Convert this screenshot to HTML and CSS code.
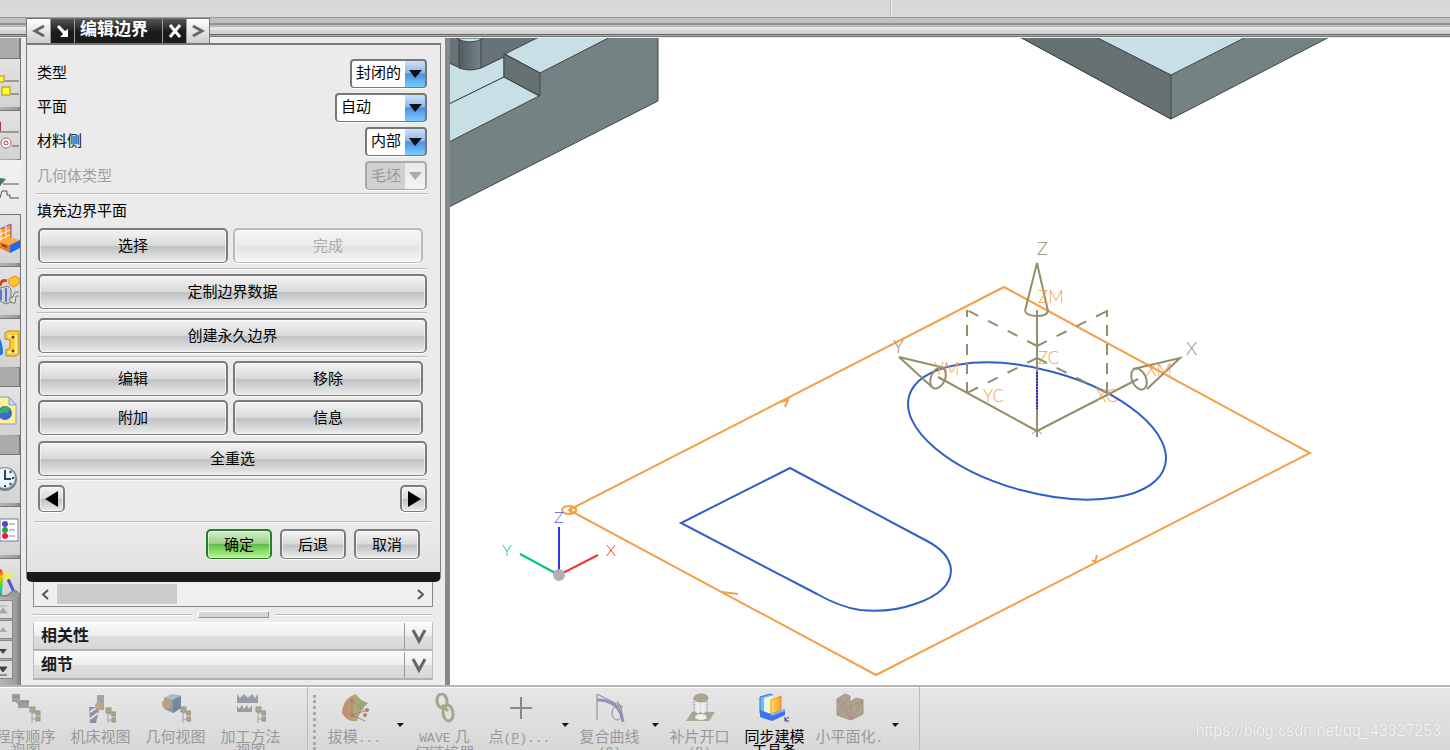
FILE: index.html
```html
<!DOCTYPE html>
<html lang="zh-CN">
<head>
<meta charset="utf-8">
<title>编辑边界</title>
<link rel="stylesheet" href="styles.css">
</head>
<body>
<svg class="defs" width="0" height="0" aria-hidden="true">
  <defs>
    <g id="tree" stroke-width="1"><path d="M2 4V20H8M2 14H8M2 8H8" fill="none" stroke="#9fa0ac"/><rect x="0" y="2" width="5" height="5" fill="#a9a98f" stroke="#95957f"/><rect x="6" y="6" width="4" height="4" fill="#aaa98f" stroke="#92927f"/><rect x="6" y="12" width="4" height="4" fill="#aaa98f" stroke="#92927f"/></g>
    <linearGradient id="cyl"><stop offset="0" stop-color="#505c60"/><stop offset="1" stop-color="#758386"/></linearGradient>
    <linearGradient id="orange"><stop offset="0" stop-color="#ffe56a"/><stop offset="1" stop-color="#ff961b"/></linearGradient>
    <linearGradient id="rainbow" x2="0" y2="1"><stop offset="0" stop-color="#f22"/><stop offset=".3" stop-color="#fb0"/><stop offset=".6" stop-color="#4d3"/><stop offset="1" stop-color="#0bf"/></linearGradient>
    <linearGradient id="leaf"><stop offset="0" stop-color="#c6866f"/><stop offset=".5" stop-color="#b0aa72"/><stop offset="1" stop-color="#7eaa78"/></linearGradient>
  </defs>
</svg>

<header class="topbar">
  <div class="topbar-cells"><div></div><div class="topbar-cell"></div></div>
  <div class="topbar-edge"></div>
</header>

<main class="work">
  <nav class="rail" aria-label="资源条">
    <div class="rail-gap"></div>
    <button class="tab" aria-label="装配导航器"><svg width="20" height="49"><path d="M5 22H19M11 35H19" stroke="#555"/><rect x="-2" y="17" width="6" height="6" fill="#ffff38" stroke="#a39500"/><rect x="2" y="28" width="8" height="8" fill="#ffff38" stroke="#a39500"/></svg></button>
    <button class="tab" aria-label="约束导航器"><svg width="20" height="49"><path d="M0 21H19M12 35H19" stroke="#555"/><path d="M0 11V20" stroke="#a33" stroke-width="2"/><circle cx="6" cy="32" r="5" fill="#fff" stroke="#b26969"/><circle cx="6" cy="32" r="2" fill="none" stroke="#a44"/></svg></button>
    <button class="tab tab-active" aria-label="工序导航器"><svg width="20" height="54"><path d="M0 18L6 19L0 26Z" fill="#49756a"/><path d="M3 24H19M0 38L2 31H7V35H10V38H19" fill="none" stroke="#555"/></svg></button>
    <button class="tab" aria-label="机床导航器"><svg width="20" height="49"><path d="M-2 15L11 9V23L-2 29Z" fill="#ff9a22" stroke="#7646d2"/><path d="M1 14V28M6 11V26M-1 20L10 15M-1 25L10 20" stroke="#fff"/><path d="M0 26L9 22L20 25L10 30Z" fill="#ffab3c"/><path d="M0 27L10 30V38L0 33Z" fill="#f27813"/><path d="M10 30L20 25V33L10 38Z" fill="#2467ee"/><path d="M2 29L7 31V33L2 31Z" fill="#834113"/></svg></button>
    <button class="tab" aria-label="重用库"><svg width="20" height="49"><path d="M0 19Q1 12 7 14" fill="none" stroke="#d94a17" stroke-width="3"/><path d="M9 12L15 9L19 11V17L13 20L9 17Z" fill="#ffc72d" stroke="#e18615"/><path d="M0 21L8 19L11 22V35L6 37L0 34Z" fill="#cdd1d8" stroke="#777"/><path d="M6 21V35M1 23V33" stroke="#6573c5" stroke-width="2"/><path d="M19 25H15L13 30L9 32L12 36H15L16 29H19" fill="#ddd" stroke="#777"/></svg></button>
    <button class="tab" aria-label="部件族"><svg width="20" height="49"><path d="M-1 18Q3 24 3 35L-1 37Z" fill="#2476dd"/><path d="M5 14L8 12H19V35L16 37H6V31L10 29V21L5 20Z" fill="#f7ce39" stroke="#bd8710"/><path d="M8 17H16V33H8" fill="none" stroke="#fff099" stroke-width="2"/><circle cx="13" cy="18" r="1.5" fill="#65450c"/><circle cx="13" cy="32" r="1.5" fill="#65450c"/></svg></button>
    <div class="rail-gap rail-gap-small"></div>
    <button class="tab" aria-label="浏览器"><svg width="20" height="49"><path d="M-1 10H9L16 18V37H-1Z" fill="#fff19a" stroke="#9295c7"/><path d="M9 10V18H16Z" fill="#cdd8f8" stroke="#9295c7"/><circle cx="5" cy="26" r="7" fill="#4066d8"/><path d="M0 22Q6 17 10 22Q7 28 4 25L0 27Z" fill="#35b45a"/></svg></button>
    <div class="rail-gap rail-gap-small"></div>
    <button class="tab" aria-label="历史记录"><svg width="20" height="49"><circle cx="5" cy="24" r="12" fill="#738590"/><circle cx="5" cy="23" r="10" fill="#edf7fc" stroke="#b7c5cc"/><path d="M5 15V24H11M5 32V30M14 23H12M11 16L10 18M11 30L10 28" stroke="#345" stroke-width="2" fill="none"/></svg></button>
    <button class="tab" aria-label="角色"><svg width="20" height="49"><rect x="0" y="12" width="18" height="22" fill="#fff" stroke="#7b7aa8"/><circle cx="5" cy="17" r="3" fill="#504dc0"/><circle cx="5" cy="23" r="3" fill="#2ba832"/><circle cx="5" cy="29" r="3" fill="#eb164e"/><path d="M9 17H15M9 23H15M9 29H15" stroke="#888" stroke-width="1"/></svg></button>
    <button class="tab tab-cut" aria-label="可视化"><svg width="20" height="39"><path d="M-1 10Q4 10 3 20L2 36H-1Z" fill="url(#rainbow)"/><path d="M7 18L14 33" stroke="#5653df" stroke-width="3"/><path d="M7 10L8 15L13 13L10 17L13 20L8 20L5 24L5 19L1 17L6 15Z" fill="#f4ef45"/><path d="M0 35Q5 39 10 34T20 35V39H0Z" fill="#9a9a9a" stroke="#777"/></svg></button>
    <div class="rail-scroll">
      <button aria-label="到顶部"><svg width="10" height="16"><path d="M0 4H7M-1 11L3 6L7 11Z" fill="#aaa" stroke="#aaa"/></svg></button>
      <button aria-label="上移"><svg width="10" height="16"><path d="M-1 10L3 5L7 10Z" fill="#aaa"/></svg></button>
      <button aria-label="下移"><svg width="10" height="16"><path d="M-1 7L3 12L7 7Z" fill="#444"/></svg></button>
      <button aria-label="到底部"><svg width="10" height="16"><path d="M-1 5L3 10L7 5ZM0 13H7" fill="#444" stroke="#444"/></svg></button>
    </div>
  </nav>

  <section class="side">
    <div class="dialog" role="dialog" aria-labelledby="dialog-title">
      <div class="titlebar">
        <button class="title-button title-light" aria-label="上一个"><svg width="14" height="14"><path d="M12 2L3 7L12 12" fill="none" stroke="#666" stroke-width="3"/></svg></button>
        <button class="title-button" aria-label="收起"><svg width="14" height="14"><path d="M1 3L3 1L9 7L12 5V13H4L7 10Z" fill="#fff"/></svg></button>
        <h1 class="title" id="dialog-title">编辑边界</h1>
        <button class="title-button" aria-label="关闭"><svg width="14" height="14"><path d="M2 1L12 13M12 1L2 13" stroke="#fff" stroke-width="3"/></svg></button>
        <button class="title-button title-light" aria-label="下一个"><svg width="14" height="14"><path d="M2 2L11 7L2 12" fill="none" stroke="#666" stroke-width="3"/></svg></button>
      </div>
      <form class="dialog-body">
        <div class="field"><label for="type">类型</label><span class="drop drop-m"><select id="type"><option>封闭的</option></select><svg width="14" height="9"><path d="M1 1H14L7 9Z"/></svg></span></div>
        <div class="field"><label for="plane">平面</label><span class="drop drop-l"><select id="plane"><option>自动</option></select><svg width="14" height="9"><path d="M1 1H14L7 9Z"/></svg></span></div>
        <div class="field"><label for="side">材料侧</label><span class="drop drop-s"><select id="side"><option>内部</option></select><svg width="14" height="9"><path d="M1 1H14L7 9Z"/></svg></span></div>
        <div class="field field-off"><label for="geom">几何体类型</label><span class="drop drop-s"><select id="geom" disabled><option>毛坯</option></select><svg width="14" height="9"><path d="M1 1H14L7 9Z"/></svg></span></div>
        <div class="group group-plane">
          <h2 class="group-title">填充边界平面</h2>
          <div class="pair"><button type="button" class="push">选择</button><button type="button" class="push" disabled>完成</button></div>
        </div>
        <div class="group"><button type="button" class="push">定制边界数据</button></div>
        <div class="group"><button type="button" class="push">创建永久边界</button></div>
        <div class="group group-actions">
          <div class="pair"><button type="button" class="push">编辑</button><button type="button" class="push">移除</button><button type="button" class="push">附加</button><button type="button" class="push">信息</button></div>
          <button type="button" class="push">全重选</button>
        </div>
        <div class="group group-step">
          <button type="button" class="push step" aria-label="上一条"><svg width="14" height="16"><path d="M13 0V16L0 8Z"/></svg></button>
          <button type="button" class="push step" aria-label="下一条"><svg width="14" height="16"><path d="M1 0V16L14 8Z"/></svg></button>
        </div>
      </form>
      <footer class="dialog-actions"><button class="push push-ok">确定</button><button class="push">后退</button><button class="push">取消</button></footer>
    </div>

    <div class="panel">
      <div class="hscroll">
        <button aria-label="向左滚动"><svg width="9" height="11"><path d="M7 1L2 5.500L7 10" fill="none" stroke="#555" stroke-width="2"/></svg></button>
        <div class="hscroll-track"><div class="hscroll-thumb"></div></div>
        <button aria-label="向右滚动"><svg width="9" height="11"><path d="M2 1L7 5.500L2 10" fill="none" stroke="#555" stroke-width="2"/></svg></button>
      </div>
      <div class="splitter"><i></i><b></b><i></i></div>
      <button class="fold"><span>相关性</span><svg width="28" height="26"><path d="M8 7L14 18L20 7" fill="none" stroke="#666" stroke-width="3"/></svg></button>
      <button class="fold"><span>细节</span><svg width="28" height="26"><path d="M8 7L14 18L20 7" fill="none" stroke="#666" stroke-width="3"/></svg></button>
    </div>
  </section>

  <section class="viewport" aria-label="图形窗口">
    <svg class="scene" viewBox="450 38 1000 647" preserveAspectRatio="xMinYMin meet">
      <g stroke="#3e4648" stroke-width="1">
        <path d="M449 30H658V101L449 207Z" fill="#748284"/>
        <path d="M449 30H553L504 57L481 68H460L449 63Z" fill="#677376"/>
        <path d="M449 63L460 68L481 68L504 57V77L449 104Z" fill="#c8dfe5"/>
        <path d="M504 77L539 96L449 142V104Z" fill="#c8dfe5"/>
        <path d="M505 54L553 30H624L540 73Z" fill="#c8dfe5"/>
        <path d="M504 54L540 73V96L504 77Z" fill="#667174"/>
        <path d="M459 30V68Q470 72 481 68V30Z" fill="url(#cyl)"/>
        <path d="M456 38Q470 46 484 38Z" fill="#c8dfe5"/>
        <path d="M1007 30L1171 119L1343 30Z" fill="#748284"/>
        <path d="M1007 30L1171 119V75L1082 30Z" fill="#667174"/>
        <path d="M1082 30L1171 75L1260 30Z" fill="#c8dfe5"/>
      </g>
      <g fill="none" stroke="#315fc7" stroke-width="2">
        <ellipse cx="1037" cy="431" rx="132.600" ry="61.200" transform="rotate(15.200 1037 431)"/>
        <path d="M790 468L681 523L817 594Q840 607 860 610Q890 613 915 604Q951 592 951 570Q950 553 927 541Z"/>
      </g>
      <g fill="none" stroke="#f5a04a" stroke-width="2">
        <path d="M569 510L1004 287L1310 453L876 675Z"/>
        <path d="M722 592L738 594M780 402L788 400L785 407M1097 555L1095 562L1092 560"/>
        <ellipse cx="569" cy="510" rx="7" ry="4"/><circle cx="573" cy="510" r="3"/>
      </g>
      <g fill="none" stroke="#938e6c" stroke-width="2">
        <path d="M1037 437V310M938 377L1037 431L1138 379"/>
        <path d="M967 393V310M1107 393V310" stroke-dasharray="11 8"/>
        <path d="M1037 346L967 310M1037 346L1107 311M1037 358L967 393M1037 358L1107 393" stroke-dasharray="11 11"/>
        <path d="M1025 311L1037 263L1048 311Q1047 316 1037 316T1025 311M1133 369L1180 358L1147 389M945 368L899 357L932 387"/>
        <ellipse cx="1139" cy="379" rx="7" ry="11" transform="rotate(-24 1139 379)"/>
        <ellipse cx="938" cy="378" rx="7" ry="11" transform="rotate(24 938 378)"/>
        <path d="M1037 372V409" stroke="#2922d9" stroke-dasharray="2 1"/>
        <path d="M1032 434L1037 430L1042 434" stroke-width="1"/>
      </g>
      <g class="mark mark-axis"><text x="1037" y="255">Z</text><text x="1186" y="355">X</text><text x="893" y="353">Y</text></g>
      <g class="mark mark-csys"><text x="1038" y="303">ZM</text><text x="1038" y="364">ZC</text><text x="934" y="375">YM</text><text x="983" y="402">YC</text><text x="1096" y="402">XC</text><text x="1146" y="376">XM</text></g>
      <g stroke-width="2"><path d="M559 575V527" stroke="#3434f0"/><path d="M559 575L520 554" stroke="#00c77c"/><path d="M559 575L598 555" stroke="#f73238"/></g>
      <circle cx="559" cy="575" r="6" fill="#b0b0b0"/>
      <g class="mark mark-small"><text x="554" y="523" fill="#5454ee">Z</text><text x="502" y="556" fill="#00c77c">Y</text><text x="606" y="556" fill="#f73238">X</text></g>
    </svg>
  </section>
</main>

<footer class="toolbar">
  <div class="tools tools-first">
    <button class="tool" disabled><svg width="30" height="30"><path d="M1 1H9V9H1ZM7 7H18V15H7Z" fill="#9ca1a5"/><path d="M2 4H9M9 9H18M5 9L10 12" stroke="#85898d"/><use href="#tree" x="19" y="12"/></svg><span>程序顺序<br>视图</span></button>
    <button class="tool" disabled><svg width="30" height="30"><path d="M11 2H18V17H11Z" fill="#a3a4a6"/><path d="M3 14H10L13 17L10 30H4Z" fill="#8c91a5"/><path d="M4 19L10 15M4 26L12 20" stroke="#e1e1e6" stroke-width="2"/><circle cx="13" cy="13" r="4" fill="#bca981"/><use href="#tree" x="20" y="13"/></svg><span>机床视图</span></button>
    <button class="tool" disabled><svg width="30" height="30"><path d="M3 5L11 1L20 3V15L12 20L3 16Z" fill="#8498b1"/><path d="M3 5L12 7L20 3L11 1Z" fill="#acb9c6"/><path d="M12 7L20 3V15L12 20Z" fill="#76869f"/><circle cx="6" cy="11" r="5" fill="#b8a17c"/><use href="#tree" x="20" y="12"/></svg><span>几何视图</span></button>
    <button class="tool" disabled><svg width="30" height="30"><path d="M1 1L4 5L8 1L12 5L16 1L19 5L22 1V10H1ZM1 19V12L3 16L6 12L8 16L11 12L13 16L16 12V19Z" fill="#979da3"/><use href="#tree" x="20" y="12"/></svg><span>加工方法<br>视图</span></button>
  </div>
  <div class="tools tools-second">
    <button class="tool" disabled><svg width="30" height="30"><path d="M2 20Q3 5 16 1Q20 8 28 10Q20 17 17 28Q8 30 2 20Z" fill="url(#leaf)"/><path d="M12 8V22L25 28M12 22L28 17M12 8L24 17" fill="none" stroke="#a2838c"/><g fill="#ba767b"><circle cx="12" cy="8" r="2"/><circle cx="12" cy="22" r="2"/><circle cx="25" cy="22" r="2"/><circle cx="27" cy="17" r="2"/></g></svg><span>拔模<em>...</em></span></button>
    <button class="more" aria-label="更多拔模"></button>
    <button class="tool" disabled><svg width="30" height="30"><g fill="none" stroke="#a7a68b" stroke-width="3"><ellipse cx="12" cy="8" rx="5" ry="7" transform="rotate(-8 12 8)"/><ellipse cx="18" cy="20" rx="5" ry="8" transform="rotate(-8 18 20)"/><path d="M12 12L18 18"/></g></svg><span><em>WAVE</em> 几<br>何链接器</span></button>
    <button class="tool" disabled><svg width="30" height="30"><path d="M16 4V26M5 15H27" stroke="#888" stroke-width="2"/></svg><span>点<em>(<u>P</u>)...</em></span></button>
    <button class="more" aria-label="更多点"></button>
    <button class="tool" disabled><svg width="30" height="30"><path d="M2 27V1L28 14" fill="none" stroke="#888"/><path d="M2 7Q25 7 28 29" fill="none" stroke="#9292bd" stroke-width="3"/><ellipse cx="22" cy="20" rx="5" ry="7" fill="none" stroke="#888"/><path d="M22 8L27 16" stroke="#888"/></svg><span>复合曲线<br><em>(C)</em></span></button>
    <button class="more" aria-label="更多曲线"></button>
    <button class="tool" disabled><svg width="30" height="30"><path d="M7 19H30L24 28H1Z" fill="#aaa990"/><ellipse cx="16" cy="24" rx="6" ry="3" fill="#f0f0ef"/><path d="M9 5V24M22 5V24" stroke="#9999b4" stroke-dasharray="2 1"/><path d="M13 7V20M18 7V20" stroke="#f0f0f3" stroke-width="3"/><ellipse cx="16" cy="5" rx="7" ry="4" fill="#aaa98c" stroke="#ad8e8e"/></svg><span>补片开口<br><em>(B)</em></span></button>
    <button class="tool"><svg width="32" height="30"><path d="M1 4L11 1L15 3V18L5 22L1 20Z" fill="#72baf2" stroke="#2876cb"/><path d="M5 5L15 2V18L5 22Z" fill="#dff7fb"/><path d="M8 6L18 3V19L8 22Z" fill="#faf6b7"/><path d="M12 7L22 3V17L12 21Z" fill="url(#orange)" stroke="#df9632"/><path d="M1 17L12 21L26 16V22L13 28L1 24Z" fill="#3d72ed"/><path d="M12 21L26 16V18L12 23Z" fill="#8eb2fa"/><path d="M30 24L26 27M26 24V28H30" fill="none" stroke="#332c99" stroke-width="1"/></svg><span>同步建模<br>工具条</span></button>
    <button class="tool" disabled><svg width="30" height="30"><path d="M2 6L10 1L15 3V9L21 5L28 7V21L16 27L2 22Z" fill="#aaa58c" stroke="#a19487"/><path d="M2 6L9 10L15 4M9 10L16 13L28 7M2 22L9 10L16 27L28 7M2 6L16 27V13L2 22" fill="none" stroke="#b18c8c"/></svg><span>小平面化<em>.</em></span></button>
    <button class="more" aria-label="更多小平面化"></button>
  </div>
  <p class="credit">https://blog.csdn.net/qq_43327253</p>
</footer>
</body>
</html>
```
FILE: styles.css
```css
* { box-sizing: border-box; }

body {
  margin: 0;
  height: 100vh;
  display: flex;
  flex-direction: column;
  overflow: hidden;
  background: #e9e9e9;
  color: #000;
  font: 15px/20px "Liberation Sans", "Noto Sans CJK SC", sans-serif;
}

button, select { font: inherit; color: inherit; margin: 0; padding: 0; }
svg { display: block; flex: none; }
.defs { position: absolute; }

/* Top strip */
.topbar { flex: none; }
.topbar-cells { height: 17px; display: grid; grid-template-columns: 890fr 560fr; background: linear-gradient(#d7d7d7, #dadada); }
.topbar-cell { border-left: 1px solid #bbb; box-shadow: inset 1px 0 #eee; }
.topbar-edge {
  height: 21px;
  background: linear-gradient(#999 0 1px, #bfbfbf 1px 6px, #929292 6px 8px, #bbb 8px 10px, #e5e5e5 10px 13px, #d2d2d2 13px 17px, #666 17px 18px, #aaa 18px 19px, #777 19px 20px, #eee 20px);
}

.work { flex: 1; min-height: 0; display: flex; }

/* Resource rail */
.rail { width: 21px; flex: none; overflow: hidden; background: linear-gradient(90deg, #b5b5b5, #9d9d9d 16px, #777); }
.rail-gap { height: 20px; background: #ababab; border-right: 2px solid #777; }
.rail-gap-small { height: 18px; }
.tab {
  display: block;
  width: 21px;
  height: 49px;
  margin-bottom: 3px;
  border: 0;
  border-right: 1px solid #777;
  border-top: 1px solid #777;
  background: linear-gradient(#e3e3e3, #d2d2d2);
  overflow: hidden;
}
.tab-active { height: 54px; margin: 0; border: 0; background: linear-gradient(#f1f1f1, #eaeaea); }
.tab:has(+ .rail-gap), .tab:has(+ .tab-active) { margin-bottom: 1px; }
.tab-cut { height: 39px; }
.rail-scroll { display: grid; gap: 1px; width: 13px; }
.rail-scroll button { height: 19px; border: 1px solid #888; border-left: 0; background: #ddd; overflow: hidden; }

/* Side area */
.side {
  width: 429px;
  flex: none;
  padding: 5px 4px 0 5px;
  display: flex;
  flex-direction: column;
  background: #ebebeb;
  border-right: 5px solid #777;
  border-image: linear-gradient(90deg, #aaa, #666 40%, #888) 1;
  border-width: 0 5px 0 0;
}

/* Dialog */
.dialog {
  position: relative;
  border: 1px solid #7b7b7b;
  border-top-width: 2px;
  border-bottom: 10px solid #181818;
  border-radius: 0 0 6px 6px;
  background: linear-gradient(#ebebeb 90%, #e2e2e2);
}
.titlebar { position: absolute; left: -1px; top: -27px; height: 26px; display: flex; border: 1px solid #777; }
.title-button {
  width: 24px;
  border: 0;
  display: grid;
  place-items: center;
  background: linear-gradient(#555, #1b1b1b 55%);
  border-right: 1px solid #999;
}
.title-button:last-child { width: 22px; border-right: 0; }
.title-light { background: linear-gradient(#fff, #ccc); }
.title {
  margin: 0;
  width: 88px;
  padding-left: 5px;
  font-size: 17px;
  line-height: 22px;
  color: #fff;
  background: linear-gradient(#555, #1b1b1b 55%);
  border-right: 1px solid #999;
}
.dialog-body { padding: 11px 13px 0 10px; }
.field { height: 34px; display: flex; align-items: center; justify-content: space-between; }
.field-off { height: 35px; color: #a0a0a0; }
.drop { display: grid; grid-template-columns: 1fr 22px; align-items: center; height: 29px; }
.drop-s { width: 62px; }
.drop-m { width: 77px; }
.drop-l { width: 92px; }
.drop select {
  grid-area: 1 / 1 / 2 / 3;
  appearance: none;
  width: 100%;
  height: 29px;
  padding: 0 0 1px 4px;
  border: 2px solid #777;
  border-bottom-width: 1px;
  border-radius: 4px;
  background: linear-gradient(#cfe2fa, #8db7ee 45%, #4b90df 50%, #79ccff) right / 20px 100% no-repeat, #fff;
  box-shadow: 0 1px #fff;
}
.drop svg { grid-area: 1 / 2; pointer-events: none; z-index: 1; margin-left: 3px; fill: #111; }
.drop select:disabled {
  color: #999;
  border-color: #aaa;
  opacity: 1;
  background: linear-gradient(#e8e8e8, #f3f3f3) right / 20px 100% no-repeat, #d0d0d0;
}
.field-off .drop svg { fill: #aaa; }

.group { border-top: 1px solid #bdbdbd; box-shadow: inset 0 1px #f8f8f8; padding: 5px 0 3px 1px; }
.group-plane { padding-bottom: 5px; }
.group-title { margin: 0 0 0 -1px; padding: 2px 0 7px; font-size: 15px; font-weight: 400; line-height: 20px; }
.pair { display: grid; grid-template-columns: 1fr 1fr; gap: 4px 5px; padding-right: 4px; }
.push {
  display: block;
  width: 100%;
  height: 35px;
  border: 2px solid #7c7c7c;
  border-bottom-width: 1px;
  border-radius: 5px;
  background: linear-gradient(#f3f3f3, #dadada 48%, #bfc1c3 52%, #ececec);
  box-shadow: 0 1px #fff, inset 0 0 0 1px #ffffff88;
}
.push:disabled { color: #aaa; border-color: #bbb; background: linear-gradient(#f5f5f5, #eaeaea 50%, #e2e2e2 52%, #f7f7f7); }
.group-actions { padding-top: 4px; }
.group-actions .pair + .push { margin-top: 6px; }
.group-step { display: flex; justify-content: space-between; padding-bottom: 9px; }
.group .step { width: 27px; height: 27px; display: grid; place-items: center; }
.dialog-actions {
  margin: 0 9px 0 7px;
  padding: 7px 11px 13px;
  border-top: 1px solid #bdbdbd;
  box-shadow: inset 0 1px #f8f8f8;
  display: flex;
  justify-content: flex-end;
  gap: 8px;
}
.dialog-actions .push { width: 66px; height: 30px; }
.dialog-actions .push-ok { border-color: #287b27; background: linear-gradient(#d4efcb, #9bd28a 46%, #62bd48 50%, #b7fa94); }

/* Panels under the dialog */
.panel { padding: 0 8px 0 7px; }
.hscroll { height: 25px; display: flex; align-items: center; border: 1px solid #888; border-top: 0; background: #efefef; }
.hscroll button { width: 23px; height: 20px; border: 0; background: none; display: grid; place-items: center; }
.hscroll-track { flex: 1; height: 20px; }
.hscroll-thumb { width: 34%; height: 100%; background: #cbcbcb; }
.splitter { height: 15px; display: flex; align-items: center; gap: 6px; }
.splitter i { flex: 1; height: 2px; border-top: 1px solid #bbb; background: #fff; }
.splitter b { width: 71px; height: 7px; background: #d5d5d5; border: 1px solid #fff; border-right-color: #999; border-bottom-color: #999; }
.fold {
  width: 100%;
  height: 29px;
  display: flex;
  align-items: center;
  justify-content: space-between;
  padding-left: 7px;
  border: 1px solid #bbb;
  border-top-color: #fff;
  border-bottom: 2px solid #b2b2b2;
  background: linear-gradient(#fafafa, #eee 48%, #dddfe0 52%, #d5d7d8);
  color: #1a1a1a;
  font-size: 16px;
  font-weight: 700;
}
.fold svg { border-left: 1px solid #999; }

/* Graphics window */
.viewport { flex: 1; min-width: 0; background: #fff; overflow: hidden; }
.scene { width: 100%; height: 100%; }
.mark { font-family: Lato, "Liberation Sans", sans-serif; font-weight: 300; font-size: 17px; }
.mark-axis { font-size: 18px; fill: #938e6c; }
.mark-csys { fill: #f5a04a; }
.mark-small { font-size: 16px; }

/* Bottom toolbar */
.toolbar {
  flex: none;
  height: 65px;
  display: flex;
  overflow: hidden;
  border-top: 2px solid #b5b5b5;
  background: linear-gradient(#e6e6e6, #d8d8d8);
  box-shadow: inset 0 1px #fff;
}
.tools { display: flex; align-items: flex-start; padding-top: 6px; border-right: 1px solid #bbb; }
.tools-first { margin-left: -12px; padding-right: 19px; }
.tools-second { position: relative; padding-left: 9px; padding-right: 17px; }
.tools-second::before { content: ""; position: absolute; left: 5px; top: 8px; bottom: 0; border-left: 3px dotted #aaa; }
.tool { width: 75px; flex: none; border: 0; background: none; display: flex; flex-direction: column; align-items: center; gap: 7px; }
.tool span { line-height: 14px; text-align: center; white-space: nowrap; }
.tool:disabled { color: #999; }
.tool em { font: 13px/14px "Liberation Mono", monospace; }
.more { width: 15px; height: 4px; margin-top: 30px; flex: none; border: 0; background: #111; clip-path: polygon(5px 0, 12px 0, 8px 4px); }
.credit { margin: 34px 9px 0 auto; font-size: 16px; line-height: 20px; color: #f4f4f4; text-shadow: 0 0 1px #aaa; }
```
